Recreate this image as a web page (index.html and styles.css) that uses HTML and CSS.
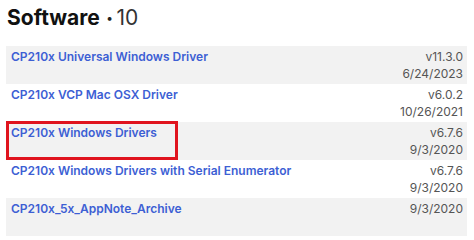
FILE: index.html
```html
<!DOCTYPE html>
<html>
<head>
<meta charset="utf-8">
<link rel="stylesheet" href="styles.css">
</head>
<body>
<div class="page">
  <h2 class="title"><span class="title-main">Software</span><span class="dot">•</span><span class="count">10</span></h2>
  <div class="list">
    <div class="row alt">
      <a class="name">CP210x Universal Windows Driver</a>
      <div class="meta"><span>v11.3.0</span><span>6/24/2023</span></div>
    </div>
    <div class="row">
      <a class="name">CP210x VCP Mac OSX Driver</a>
      <div class="meta"><span>v6.0.2</span><span>10/26/2021</span></div>
    </div>
    <div class="row alt marked">
      <a class="name">CP210x Windows Drivers</a>
      <div class="meta"><span>v6.7.6</span><span>9/3/2020</span></div>
      <span class="highlight"></span>
    </div>
    <div class="row">
      <a class="name">CP210x Windows Drivers with Serial Enumerator</a>
      <div class="meta"><span>v6.7.6</span><span>9/3/2020</span></div>
    </div>
    <div class="row alt">
      <a class="name">CP210x_5x_AppNote_Archive</a>
      <div class="meta"><span>9/3/2020</span></div>
    </div>
  </div>
</div>
</body>
</html>
```

FILE: styles.css
```css
html, body {
  margin: 0;
  padding: 0;
  background: #ffffff;
}
.page {
  width: 474px;
  height: 240px;
  overflow: hidden;
  font-family: Inter, "Noto Sans", sans-serif;
  padding: 0 7px 0 6px;
  box-sizing: border-box;
}
.title {
  margin: 0;
  padding: 5px 0 0 1px;
  height: 46px;
  box-sizing: border-box;
  font-size: 21px;
  line-height: 26px;
  font-weight: 700;
  color: #111;
  display: flex;
  align-items: baseline;
}
.dot {
  font-size: 12px;
  font-weight: 700;
  margin: 0 4px 0 7px;
  color: #222;
  position: relative;
  top: -3px;
}
.count {
  font-weight: 400;
  color: #333;
}
.list {
  display: flex;
  flex-direction: column;
}
.row {
  display: flex;
  justify-content: space-between;
  align-items: flex-start;
  height: 38px;
  box-sizing: border-box;
  padding: 2px 4px 2px 5px;
  font-size: 12px;
  line-height: 17px;
}
.row.alt {
  background: #f2f2f2;
}
.marked {
  position: relative;
}
.name {
  color: #3d5fd4;
  font-weight: 600;
  text-decoration: none;
}
.meta {
  display: flex;
  flex-direction: column;
  align-items: flex-end;
  color: #555;
  font-weight: 400;
}
.highlight {
  position: absolute;
  left: 0;
  top: -1px;
  width: 172px;
  height: 39px;
  border: 3px solid #e0141e;
  box-sizing: border-box;
}
```
